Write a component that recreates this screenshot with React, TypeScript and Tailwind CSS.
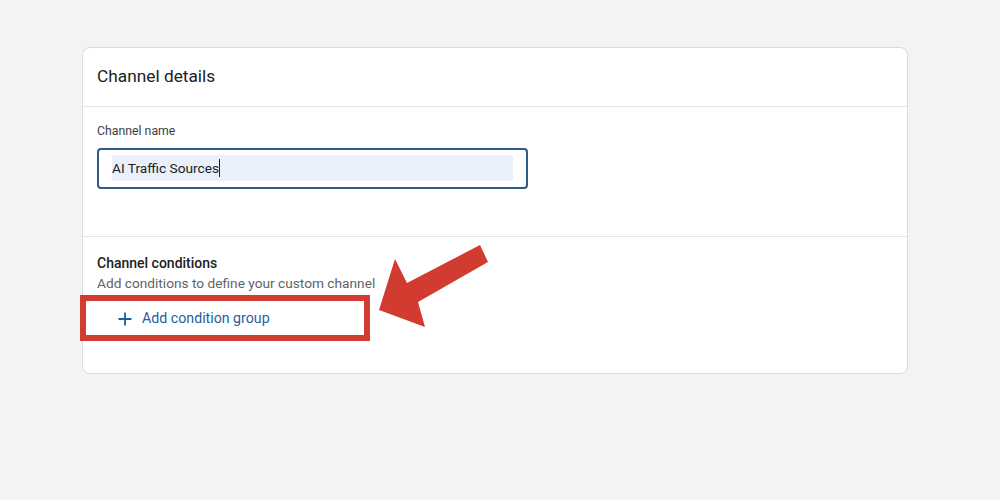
import React from "react";

export default function App() {
  return (
    <div
      className="relative w-[1000px] h-[500px] bg-[#f1f3f4] overflow-hidden"
      style={{ fontFamily: "Roboto, 'Liberation Sans', sans-serif" }}
    >
      <div className="pt-[47px] pl-[82px]">
        {/* Card */}
        <div className="relative w-[826px] h-[327px] bg-white border border-[#dadce0] rounded-lg">
          <div className="h-[59px] flex items-center pl-[14px] border-b border-[#e3e5e8]">
            <h2 className="text-[17.3px] text-[#202124]">Channel details</h2>
          </div>

          <div className="h-[130px] pl-[14px] pt-[16px] border-b border-[#e3e5e8]">
            <label className="block text-[12.3px] leading-4 text-[#3c4043]">
              Channel name
            </label>
            <div className="mt-[9px] w-[431px] h-[41px] border-2 border-[#2f5a87] rounded-[4px] pl-[13px] pr-[13px] pt-[5px]">
              <div className="h-[26px] bg-[#e9f0fb] flex items-center text-[13.7px] text-[#202124]">
                <span>AI Traffic Sources</span>
                <span className="w-px h-[18px] bg-[#202124]" />
              </div>
            </div>
          </div>

          <div className="relative pl-[14px] pt-[16px]">
            <h3 className="text-[14px] leading-5 font-medium text-[#202124]">
              Channel conditions
            </h3>
            <p className="text-[13.7px] leading-5 text-[#5f6368]">
              Add conditions to define your custom channel
            </p>
            <button className="mt-[14px] ml-[21px] flex items-center gap-[10px] h-6 text-[14.2px] text-[#1f5f9e]">
              <svg width="14" height="14" viewBox="0 0 14 14">
                <path d="M7 0.5v13M0.5 7h13" stroke="#1f5f9e" strokeWidth="1.8" />
              </svg>
              Add condition group
            </button>
            {/* annotation box */}
            <div className="absolute left-[-3px] top-[58px] w-[290px] h-[46px] border-[6px] border-[#d23b30]" />
          </div>
        </div>
      </div>

      {/* annotation arrow */}
      <svg
        className="absolute left-0 top-0"
        width="1000"
        height="500"
        viewBox="0 0 1000 500"
      >
        <polygon
          points="379,310 395,259 407,283 480,245 488,262 418,302 425,327"
          fill="#d23b30"
        />
      </svg>
    </div>
  );
}
